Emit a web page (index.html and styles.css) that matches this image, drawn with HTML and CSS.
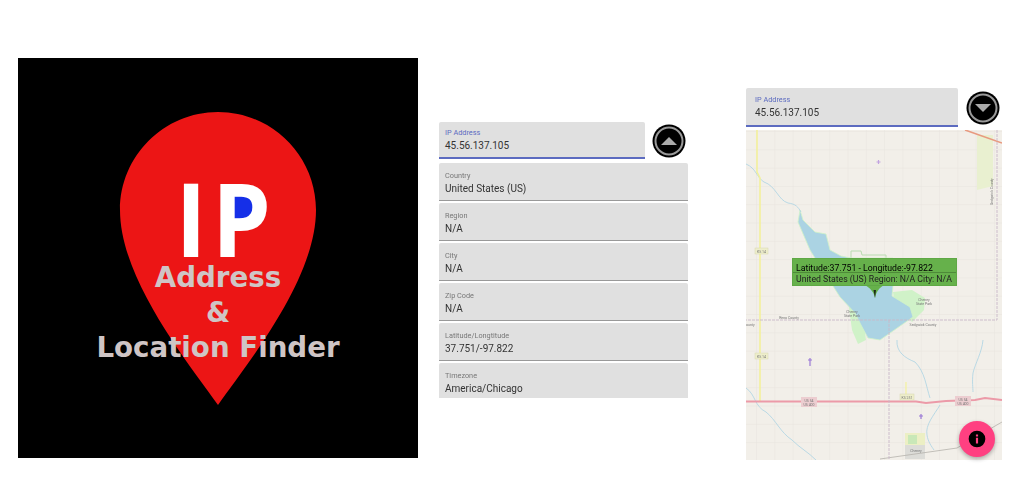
FILE: index.html
```html
<!DOCTYPE html>
<html lang="en">
<head>
  <meta charset="UTF-8">
  <title>IP Address &amp; Location Finder</title>
  <link rel="stylesheet" href="styles.css">
</head>
<body>
<div class="page">

  <!-- store logo -->
  <div class="logo">
    <svg class="pin" viewBox="0 0 400 400" width="400" height="400">
      <path fill="#ec1515" d="M200 347C172 307 102 222 102 152C102 98 146 54 200 54C254 54 298 98 298 152C298 222 228 307 200 347Z"/>
      <path fill="#152fe8" d="M216 138H228C234 138 237 146 237 151C237 157 234 163 228 163H216Z"/>
    </svg>
    <div class="logo-ip">IP</div>
    <div class="logo-line first">Address</div>
    <div class="logo-line">&amp;</div>
    <div class="logo-line">Location Finder</div>
  </div>

  <!-- details screen -->
  <div class="screen details">
    <div class="top">
      <div class="field ip-field">
        <span class="label">IP Address</span>
        <span class="value">45.56.137.105</span>
      </div>
      <div class="toggle">
        <svg viewBox="0 0 34 34" width="34" height="34">
          <circle cx="17" cy="17" r="16.5" fill="#000"/>
          <circle cx="17" cy="17" r="13.5" fill="#000" stroke="#9a9a9a" stroke-width="2"/>
          <path fill="#aaa" d="M9 21L17 13L25 21Z"/>
        </svg>
      </div>
    </div>
    <div class="rows">
      <div class="field row"><span class="label">Country</span><span class="value">United States (US)</span></div>
      <div class="field row"><span class="label">Region</span><span class="value">N/A</span></div>
      <div class="field row"><span class="label">City</span><span class="value">N/A</span></div>
      <div class="field row"><span class="label">Zip Code</span><span class="value">N/A</span></div>
      <div class="field row"><span class="label">Latitude/Longtitude</span><span class="value">37.751/-97.822</span></div>
      <div class="field row"><span class="label">Timezone</span><span class="value">America/Chicago</span></div>
    </div>
  </div>

  <!-- map screen -->
  <div class="screen mapview">
    <div class="top">
      <div class="field ip-field">
        <span class="label">IP Address</span>
        <span class="value">45.56.137.105</span>
      </div>
      <div class="toggle">
        <svg viewBox="0 0 34 34" width="34" height="34">
          <circle cx="17" cy="17" r="16.5" fill="#000"/>
          <circle cx="17" cy="17" r="13.5" fill="#000" stroke="#9a9a9a" stroke-width="2"/>
          <path fill="#aaa" d="M9 13L25 13L17 21Z"/>
        </svg>
      </div>
    </div>
    <div class="map">
      <svg viewBox="746 130 256 330" width="256" height="330">
        <defs>
          <pattern id="grid" x="757" y="132" width="18.3" height="18.3" patternUnits="userSpaceOnUse">
            <path d="M18.3 0V18.3H0" fill="none" stroke="#e7e4de" stroke-width="1"/>
          </pattern>
        </defs>
        <rect x="746" y="130" width="256" height="330" fill="#f2efe9"/>
        <rect x="746" y="130" width="256" height="330" fill="url(#grid)"/>

        <!-- parks -->
        <path fill="#e9f0d0" d="M977 135H993V186L977 190Z"/>
        <path fill="#d0f2c8" d="M893 292L912 290L925 298L924 310L912 322L905 314L895 305Z"/>
        <path fill="#d0f2c8" d="M848 300L862 312L866 340L858 344L852 330Z"/>
        <path fill="none" stroke="#b9dcb0" d="M851 258V251H861L862 255H886V258"/>
        <path fill="#ecefc4" d="M905 433H925V459H905Z"/>
        <path fill="#c9e8b8" d="M908 435H917V444H908Z"/>
        <path fill="#dcdcd8" d="M905 445H925V459H905Z"/>

        <!-- water -->
        <path fill="#abd3e3" stroke="#d0f2c8" stroke-width="0.800" d="M800 210L803 220L815 232L826 234L830 250L841 256L851 258H893V286L892 296L910 307L913 317L880 340L868 338L861 325L855 313L840 297L833 286L815 258L810 250L798 222Z"/>
        <path fill="none" stroke="#abd3e3" stroke-width="0.800" d="M746 164C756 168 757 178 764 182C776 186 778 200 788 203C796 204 798 207 801 212M746 388C756 395 754 406 766 412C776 420 780 432 792 440C800 448 808 452 816 460M897 340C896 352 905 358 915 362C925 372 926 386 930 398M940 405C934 415 925 425 927 435C928 442 932 447 934 450M983 340C982 352 975 364 973 373C972 382 973 388 973 392"/>

        <!-- roads -->
        <path fill="none" stroke="#f3f19c" stroke-width="1.600" d="M757 130V172L760 178V402"/>
        <path fill="none" stroke="#f3f19c" stroke-width="1.200" d="M906 382V400"/>
        <path fill="none" stroke="#ec9aa8" stroke-width="2" d="M746 401.500H916L926 403L946 401L975 400L985 398L1002 400"/>
        <path fill="none" stroke="#e89a80" stroke-width="1.600" d="M965 130L1002 143"/>
        <path fill="none" stroke="#b5b3ac" stroke-width="0.800" d="M880 459L957 448L1002 422"/>
        <path fill="none" stroke="#c8b8c8" stroke-width="0.900" stroke-dasharray="3 1" d="M997 130V320H746M889 320V460"/>

        <!-- towns and small points -->
        <path fill="none" stroke="#c2a3e0" stroke-width="1.200" d="M878.500 160V164M876.500 162H880.500"/>
        <path fill="none" stroke="#9a78d6" stroke-width="1.200" d="M810 358V366M808 360H812"/>
        <path fill="none" stroke="#9a78d6" stroke-width="1.200" d="M921 414V419M919 416H923"/>

        <!-- shields -->
        <rect x="755" y="248" width="13" height="6" fill="#eeeecb" stroke="#d8d8b0" stroke-width="0.500"/>
        <text class="maptxt" x="761.500" y="252.500" text-anchor="middle">KS 14</text>
        <rect x="755" y="353" width="13" height="6" fill="#eeeecb" stroke="#d8d8b0" stroke-width="0.500"/>
        <text class="maptxt" x="761.500" y="357.500" text-anchor="middle">KS 14</text>
        <rect x="900" y="394" width="14" height="6" fill="#eeeecb" stroke="#d8d8b0" stroke-width="0.500"/>
        <text class="maptxt" x="907" y="398.500" text-anchor="middle">KS 251</text>
        <rect x="801" y="397" width="16" height="10" fill="#eccdd0"/>
        <text class="maptxt" x="809" y="401.500" text-anchor="middle">US 54</text>
        <text class="maptxt" x="809" y="405.500" text-anchor="middle">US 400</text>
        <rect x="955" y="396" width="16" height="10" fill="#eccdd0"/>
        <text class="maptxt" x="963" y="400.500" text-anchor="middle">US 54</text>
        <text class="maptxt" x="963" y="404.500" text-anchor="middle">US 400</text>
        <text class="maptxt" x="789" y="318.500" text-anchor="middle">Reno County</text>
        <text class="maptxt" x="746" y="325.500">ounty</text>
        <text class="maptxt" x="923" y="325.500" text-anchor="middle">Sedgwick County</text>
        <text class="maptxt" x="852" y="313" text-anchor="middle">Cheney</text>
        <text class="maptxt" x="852" y="317" text-anchor="middle">State Park</text>
        <text class="maptxt" x="924" y="301" text-anchor="middle">Cheney</text>
        <text class="maptxt" x="924" y="305" text-anchor="middle">State Park</text>
        <text class="maptxt" x="916" y="452" text-anchor="middle">Cheney</text>
        <text class="maptxt" x="993" y="205" transform="rotate(-90 993 205)">Sedgwick County</text>

        <!-- popup tail -->
        <path fill="#66b14b" d="M865 285H884C879 288 876 292 875 298C874 292 870 288 865 285Z"/>
        <path fill="#1c2a18" d="M873.500 290H876L875 298Z"/>
      </svg>

      <div class="popup">
        <div class="popup-title">Latitude:37.751 - Longitude:-97.822</div>
        <div class="popup-text">United States (US) Region: N/A City: N/A</div>
      </div>

      <div class="fab">
        <svg viewBox="0 0 24 24" width="20" height="20">
          <path fill="#000" d="M12 2a10 10 0 1 0 0 20a10 10 0 0 0 0-20ZM13.300 17.500h-2.600v-7h2.600ZM13.300 9h-2.600V6.500h2.600Z"/>
        </svg>
      </div>
    </div>
  </div>

</div>
</body>
</html>
```

FILE: styles.css
```css
* { box-sizing: border-box; margin: 0; padding: 0 }
body { background: #fff; font-family: Roboto, sans-serif; overflow: hidden }

.page {
  display: flex;
  align-items: flex-start;
  width: 1024px;
  height: 500px;
  padding-left: 18px;
}

/* logo */
.logo {
  position: relative;
  display: flex;
  flex-direction: column;
  align-items: center;
  width: 400px;
  height: 400px;
  margin-top: 58px;
  padding-top: 122px;
  background: #000;
  font-family: "DejaVu Sans", sans-serif;
  font-weight: bold;
}
.pin { position: absolute; left: 0; top: 0 }
.logo-ip {
  position: relative;
  margin-left: 16px;
  color: #fff;
  font-family: "Open Sans", sans-serif;
  font-size: 102px;
  line-height: 76px;
  letter-spacing: 6px;
  transform: scaleX(.92);
}
.logo-line {
  position: relative;
  color: #cfc5c5;
  font-size: 27.700px;
  line-height: 35px;
  white-space: nowrap;
}
.logo-line.first { margin-top: 4px }

/* shared form parts */
.screen { filter: blur(.4px) }
.top { display: flex; align-items: center }
.field {
  display: flex;
  flex-direction: column;
  padding: 8px 6px 0;
  background: #e0e0e0;
  border-radius: 2px 2px 0 0;
}
.label { font-size: 7.300px; line-height: 10px; color: #777 }
.value { margin-top: 1px; font-size: 10px; line-height: 14px; color: #333 }
.ip-field { padding-top: 6px; border-bottom: 2px solid #5c6bc0 }
.ip-field .label { color: #5c6bc0 }
.toggle { display: flex }

/* details screen */
.details { width: 249px; margin: 122px 0 0 21px }
.details .ip-field { width: 206px; height: 37px }
.details .toggle { margin-left: 7px }
.rows {
  display: flex;
  flex-direction: column;
  gap: 2px;
  height: 235px;
  margin-top: 4px;
  overflow: hidden;
}
.row { flex: 0 0 38px; border-bottom: 1px solid #999 }

/* map screen */
.mapview { width: 256px; margin: 88px 0 0 58px }
.mapview .ip-field { width: 212px; height: 39px; padding: 7px 9px 0 }
.mapview .toggle { margin-left: 8px }
.map { position: relative; height: 330px; margin-top: 3px }
.map svg { display: block }
.maptxt { font-family: Roboto, sans-serif; font-size: 3.500px; fill: #777 }

.popup {
  position: absolute;
  left: 46px;
  top: 128px;
  width: 165px;
  height: 28px;
  background: #66b14b;
  border: 1px solid #5fa845;
  font-size: 8.700px;
  white-space: nowrap;
}
.popup-title {
  height: 14px;
  padding: 4px 0 0 3px;
  line-height: 10px;
  color: #000;
  border-bottom: 1px solid #4e8a39;
}
.popup-text { padding-left: 3px; line-height: 12px; color: #222 }

.fab {
  position: absolute;
  right: 7px;
  bottom: 3px;
  display: flex;
  align-items: center;
  justify-content: center;
  width: 36px;
  height: 36px;
  background: #ff4081;
  border-radius: 50%;
  box-shadow: 0 2px 4px rgba(0, 0, 0, .3);
}
```
